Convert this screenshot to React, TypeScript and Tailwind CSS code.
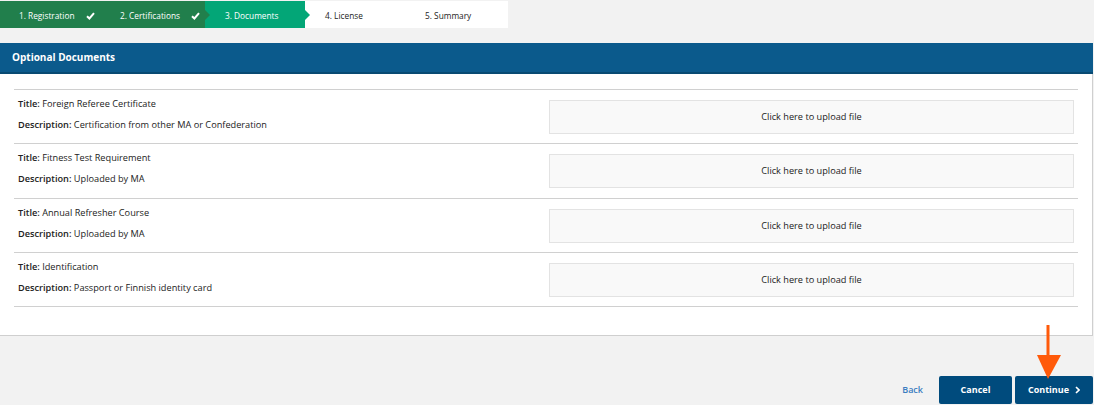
import React from "react";

const docs = [
  { title: "Foreign Referee Certificate", desc: "Certification from other MA or Confederation" },
  { title: "Fitness Test Requirement", desc: "Uploaded by MA" },
  { title: "Annual Refresher Course", desc: "Uploaded by MA" },
  { title: "Identification", desc: "Passport or Finnish identity card" },
];

function Check() {
  return (
    <svg width="9" height="8" viewBox="0 0 9 8" className="shrink-0">
      <path d="M1 4.2 L3.4 6.5 L8 1.2" stroke="white" strokeWidth="2" fill="none" />
    </svg>
  );
}

export default function App() {
  return (
    <div
      className="relative w-[1094px] h-[405px] bg-[#f2f2f2] overflow-hidden text-[#222]"
      style={{ fontFamily: '"Open Sans", "Noto Sans", sans-serif' }}
    >
      {/* Stepper */}
      <div className="flex mt-[1px] w-[508px] h-[27px] bg-white text-[8.3px]">
        <div className="relative flex items-center w-[101px] bg-[#217f4c] text-white pl-[19px] pr-[4px] pt-[3px] justify-between">
          <span>1. Registration</span>
          <span className="mr-[2px]"><Check /></span>
        </div>
        <div className="relative flex items-center w-[104px] bg-[#217f4c] text-white pl-[19px] pr-[4px] pt-[3px] justify-between">
          <span>2. Certifications</span>
          <span className="mr-[1px]"><Check /></span>
          <span className="absolute right-[-5px] top-[9px] w-0 h-0 border-y-[5px] border-y-transparent border-l-[5px] border-l-[#217f4c] z-10" />
        </div>
        <div className="relative flex items-center w-[100px] bg-[#03a677] text-white pl-[20px] pt-[3px]">
          <span>3. Documents</span>
          <span className="absolute right-[-5px] top-[9px] w-0 h-0 border-y-[5px] border-y-transparent border-l-[5px] border-l-[#03a677] z-10" />
        </div>
        <div className="flex items-center w-[100px] pl-[20px] pt-[3px] text-[#222]">4. License</div>
        <div className="flex items-center w-[103px] pl-[20px] pt-[3px] text-[#222]">5. Summary</div>
      </div>

      {/* Panel */}
      <div className="mt-[15px] w-[1093px]">
        <div className="h-[31px] bg-[#0b5a8c] border-b-[2px] border-[#084a72] flex items-center pl-[12px]">
          <span className="text-white font-bold text-[10px]">Optional Documents</span>
        </div>
        <div className="bg-white border-r border-b border-[#cfcfcf] pt-[15px] pb-[28px] px-[14px]">
          <div className="border-t border-[#d0d0d0]">
            {docs.map((d) => (
              <div key={d.title} className="flex items-start h-[54.3px] border-b border-[#d0d0d0]">
                <div className="w-[535px] pl-[4px] pt-[7px] flex flex-col gap-[8px] text-[9.2px] leading-[13px]">
                  <div>
                    <span className="font-semibold">Title:</span> {d.title}
                  </div>
                  <div>
                    <span className="font-semibold">Description:</span> {d.desc}
                  </div>
                </div>
                <div className="mt-[10px] w-[525px] h-[34px] bg-[#f9f9f9] border border-[#e3e3e3] flex items-center justify-center text-[9.2px]">
                  Click here to upload file
                </div>
              </div>
            ))}
          </div>
        </div>
      </div>

      {/* Footer buttons */}
      <div className="absolute right-[1px] bottom-[1px] flex items-center gap-[3px]">
        <span className="text-[#3a7cc0] text-[9px] font-semibold mr-[13px]">Back</span>
        <div className="w-[73px] h-[28px] rounded-[2px] bg-[#004b7d] text-white text-[9px] font-bold flex items-center justify-center">
          Cancel
        </div>
        <div className="w-[78px] h-[28px] rounded-[2px] bg-[#004b7d] text-white text-[9px] font-bold flex items-center justify-center gap-[6px]">
          <span>Continue</span>
          <svg width="5" height="8" viewBox="0 0 5 8">
            <path d="M1 1 L4 4 L1 7" stroke="white" strokeWidth="1.6" fill="none" />
          </svg>
        </div>
      </div>

      {/* Orange annotation arrow */}
      <svg className="absolute left-[1036px] top-[325px]" width="26" height="55" viewBox="0 0 26 55">
        <rect x="10.5" y="0" width="3" height="32" fill="#ff5a0a" />
        <polygon points="1,30 25,30 12,54" fill="#ff5a0a" />
      </svg>
    </div>
  );
}
